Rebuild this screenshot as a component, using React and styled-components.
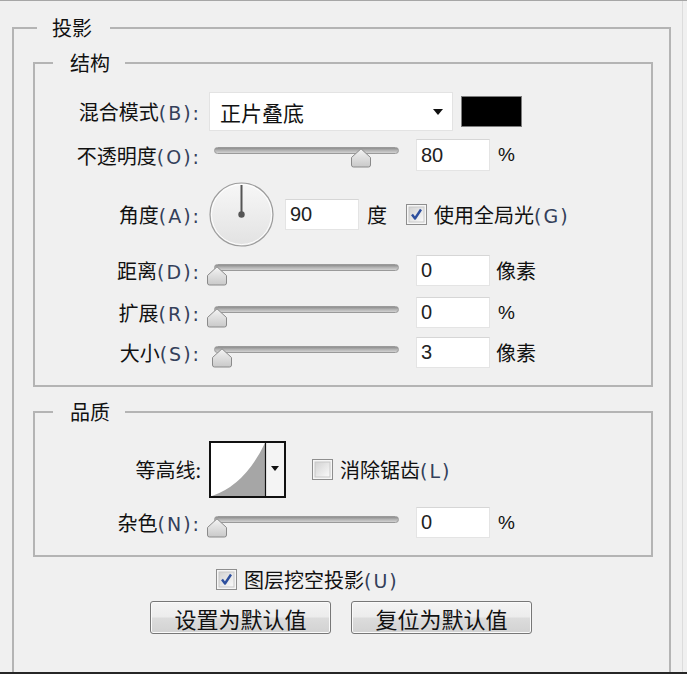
import React from "react";
import styled, { createGlobalStyle } from "styled-components";

const Global = createGlobalStyle`
  html, body { margin: 0; padding: 0; background: #f0f0f0; }
  body { font-family: "Noto Sans CJK SC", "Noto Sans", sans-serif; color: #1b1b1b; }
`;

const Window = styled.div`
  width: 687px;
  height: 674px;
  box-sizing: border-box;
  overflow: hidden;
  background: #f0f0f0;
  border-top: 1px solid #a6a6a6;
  border-bottom: 2px solid #262626;
  padding-left: 12px;
  padding-right: 4px;
  position: relative;
  &::after {
    content: "";
    position: absolute;
    top: 0;
    bottom: 0;
    right: 4px;
    border-right: 1px solid #dcdcdc;
  }
`;

const Group = styled.fieldset`
  margin: ${(p) => p.$mt || 0}px 0 0 0;
  padding: 0;
  box-sizing: border-box;
  width: ${(p) => p.$w}px;
  border: 2px solid #b4b4b4;
  border-bottom: ${(p) => (p.$open ? "none" : "2px solid #b4b4b4")};
  min-height: ${(p) => (p.$open ? "700px" : "auto")};
`;

const Legend = styled.legend`
  margin-left: ${(p) => p.$ml}px;
  padding: 0 ${(p) => p.$pr}px 0 ${(p) => p.$pl}px;
  font-size: 20px;
  line-height: 24px;
  color: #111;
`;

const OuterBody = styled.div`
  padding: 11px 0 0 19px;
`;

const InnerBody = styled.div`
  padding: 17px 0 17px 1px;
  display: flex;
  flex-direction: column;
`;

const Row = styled.div`
  display: flex;
  align-items: center;
  gap: 8px;
  height: ${(p) => p.$h}px;
  margin-top: ${(p) => p.$mt || 0}px;
`;

const Label = styled.span`
  flex: none;
  width: 165px;
  text-align: right;
  font-size: 20px;
  white-space: nowrap;
  color: #111;
`;

const Key = styled.span`
  font-family: "DejaVu Sans", sans-serif;
  font-size: 19px;
  letter-spacing: 2px;
  color: #34405a;
`;

const Dropdown = styled.div`
  width: 244px;
  height: 39px;
  box-sizing: border-box;
  background: #ffffff;
  border: 1px solid #e3e3e3;
  display: flex;
  align-items: center;
  justify-content: space-between;
  padding: 0 9px 0 10px;
  font-size: 21px;
  color: #111;
`;

const Caret = styled.span`
  width: 0;
  height: 0;
  border-left: 5px solid transparent;
  border-right: 5px solid transparent;
  border-top: 6px solid #111;
`;

const Swatch = styled.div`
  width: 61px;
  height: 31px;
  box-sizing: border-box;
  background: #000;
  border: 1px solid #7d7d7d;
  margin-top: -1px;
`;

const SliderBox = styled.div`
  position: relative;
  width: 199px;
  height: 100%;
  flex: none;
`;

const Track = styled.div`
  margin: ${(p) => p.$top}px 0 0 5px;
  width: 185px;
  height: 7px;
  box-sizing: border-box;
  border-radius: 4px;
  border: 1px solid #9a9a9a;
  background: linear-gradient(#8e8e8e, #b4b4b4 50%, #d2d2d2);
`;

const ThumbSvg = styled.svg`
  position: absolute;
  top: ${(p) => p.$top}px;
`;

const NumberBox = styled.div`
  flex: none;
  width: 74px;
  height: ${(p) => p.$h || 32}px;
  box-sizing: border-box;
  background: #fff;
  border: 1px solid #e4e4e4;
  border-top-color: #d6d6d6;
  display: flex;
  align-items: center;
  padding-left: 4px;
  font-family: "Liberation Sans", Arial, sans-serif;
  font-size: 20px;
  color: #222;
`;

const Unit = styled.span`
  font-size: ${(p) => (p.$latin ? 19 : 20)}px;
  font-family: ${(p) =>
    p.$latin ? '"Liberation Sans", Arial, sans-serif' : '"Noto Sans CJK SC", sans-serif'};
  color: #111;
  margin-left: ${(p) => p.$ml || 0}px;
`;

const DialSvg = styled.svg`
  flex: none;
  margin-right: 3px;
`;

const CheckWrap = styled.label`
  display: flex;
  align-items: center;
  gap: 7px;
  margin-left: ${(p) => p.$ml || 0}px;
  font-size: 20px;
  color: #111;
  white-space: nowrap;
`;

const ContourSvg = styled.svg`
  flex: none;
  margin-right: 18px;
`;

const Footer = styled.div`
  display: flex;
  flex-direction: column;
`;

const CheckRow = styled.div`
  display: flex;
  align-items: center;
  height: 21px;
  margin: 12px 0 0 183px;
`;

const Buttons = styled.div`
  display: flex;
  gap: 20px;
  margin: 11px 0 0 117px;
`;

const Button = styled.button`
  width: 181px;
  height: 33px;
  box-sizing: border-box;
  border: 1px solid #777;
  border-radius: 3px;
  background: linear-gradient(#f4f4f4, #ececec 48%, #dcdcdc 52%, #d2d2d2);
  box-shadow: inset 0 0 0 1px #fafafa;
  font-family: "Noto Sans CJK SC", sans-serif;
  font-size: 22px;
  line-height: 1;
  color: #111;
  padding: 0;
`;

function Key_({ k }) {
  return <Key>({k}):</Key>;
}

function Thumb({ pct, top }) {
  const left = 7 + pct * 181 - 10.5;
  return (
    <ThumbSvg $top={top} width="22" height="20" viewBox="0 0 22 20" style={{ left }}>
      <defs>
        <linearGradient id="tg" x1="0" y1="0" x2="0" y2="1">
          <stop offset="0" stopColor="#f4f4f4" />
          <stop offset="1" stopColor="#c9c9c9" />
        </linearGradient>
      </defs>
      <path
        d="M11 0.8 L20.5 9.5 L20.5 17 Q20.5 19 18.5 19 L3.5 19 Q1.5 19 1.5 17 L1.5 9.5 Z"
        fill="url(#tg)"
        stroke="#8a8a8a"
        strokeWidth="1"
      />
    </ThumbSvg>
  );
}

function Slider({ pct, trackTop = 8, thumbTop = 10 }) {
  return (
    <SliderBox>
      <Track $top={trackTop} />
      <Thumb pct={pct} top={thumbTop} />
    </SliderBox>
  );
}

function CheckBox({ checked }) {
  return (
    <svg width="21" height="21" viewBox="0 0 21 21">
      <defs>
        <linearGradient id={checked ? "cbg1" : "cbg0"} x1="0" y1="0" x2="1" y2="1">
          <stop offset="0" stopColor="#d2d2d2" />
          <stop offset="1" stopColor="#fbfbfb" />
        </linearGradient>
      </defs>
      <rect x="0.5" y="0.5" width="20" height="20" fill="#f6f6f6" stroke="#8e8e8e" />
      <rect x="3" y="3" width="15" height="15" fill={`url(#${checked ? "cbg1" : "cbg0"})`} stroke="#c8c8c8" />
      {checked && (
        <path d="M6 10.5 L9 14.5 L15 5.5" fill="none" stroke="#2d4f9e" strokeWidth="2.4" strokeLinejoin="round" />
      )}
    </svg>
  );
}

function Dial() {
  return (
    <DialSvg width="65" height="65" viewBox="0 0 65 65">
      <defs>
        <linearGradient id="dialg" x1="0" y1="0" x2="0" y2="1">
          <stop offset="0" stopColor="#f7f7f7" />
          <stop offset="1" stopColor="#e2e2e2" />
        </linearGradient>
      </defs>
      <circle cx="32.5" cy="32.5" r="31.5" fill="url(#dialg)" stroke="#9c9c9c" strokeWidth="1.2" />
      <circle cx="32.5" cy="32.5" r="30" fill="none" stroke="#ffffff" strokeWidth="1" />
      <line x1="32.5" y1="32.5" x2="32.5" y2="3" stroke="#555" strokeWidth="2" />
      <circle cx="32.5" cy="32.5" r="3.2" fill="#555" />
    </DialSvg>
  );
}

function Contour() {
  return (
    <ContourSvg width="77" height="57" viewBox="0 0 77 57">
      <rect x="1" y="1" width="75" height="55" fill="#fff" stroke="#111" strokeWidth="2" />
      <path d="M3 55 Q36 44 56 2 L56 55 Z" fill="#a6a6a6" />
      <rect x="56.5" y="2" width="18.5" height="53" fill="#f4f4f4" />
      <line x1="56.5" y1="1" x2="56.5" y2="56" stroke="#111" strokeWidth="1.2" />
      <path d="M62 25 L70 25 L66 30 Z" fill="#111" />
    </ContourSvg>
  );
}

export default function App() {
  return (
    <>
      <Global />
      <Window>
        <Group $w={659} $open $mt={15}>
          <Legend $ml={23} $pl={15} $pr={18}>投影</Legend>
          <OuterBody>
            <Group $w={620}>
              <Legend $ml={18} $pl={17} $pr={15}>结构</Legend>
              <InnerBody>
                <Row $h={39}>
                  <Label>混合模式<Key_ k="B" /></Label>
                  <Dropdown>
                    <span>正片叠底</span>
                    <Caret />
                  </Dropdown>
                  <Swatch />
                </Row>
                <Row $h={32} $mt={8}>
                  <Label>不透明度<Key_ k="O" /></Label>
                  <Slider pct={0.8} trackTop={8} thumbTop={9} />
                  <NumberBox>80</NumberBox>
                  <Unit $latin>%</Unit>
                </Row>
                <Row $h={64} $mt={11}>
                  <Label>角度<Key_ k="A" /></Label>
                  <Dial />
                  <NumberBox $h={31}>90</NumberBox>
                  <Unit>度</Unit>
                  <CheckWrap $ml={11}>
                    <CheckBox checked />
                    <span>使用全局光<Key>(G)</Key></span>
                  </CheckWrap>
                </Row>
                <Row $h={31} $mt={9}>
                  <Label>距离<Key_ k="D" /></Label>
                  <Slider pct={0} trackTop={9} thumbTop={11} />
                  <NumberBox $h={31}>0</NumberBox>
                  <Unit $ml={-2}>像素</Unit>
                </Row>
                <Row $h={31} $mt={11}>
                  <Label>扩展<Key_ k="R" /></Label>
                  <Slider pct={0} trackTop={9} thumbTop={11} />
                  <NumberBox $h={31}>0</NumberBox>
                  <Unit $latin>%</Unit>
                </Row>
                <Row $h={31} $mt={9}>
                  <Label>大小<Key_ k="S" /></Label>
                  <Slider pct={0.03} trackTop={9} thumbTop={11} />
                  <NumberBox $h={31}>3</NumberBox>
                  <Unit $ml={-2}>像素</Unit>
                </Row>
              </InnerBody>
            </Group>
            <Group $w={620} $mt={13}>
              <Legend $ml={18} $pl={17} $pr={15}>品质</Legend>
              <InnerBody>
                <Row $h={56}>
                  <Label>等高线:</Label>
                  <Contour />
                  <CheckWrap>
                    <CheckBox />
                    <span>消除锯齿<Key>(L)</Key></span>
                  </CheckWrap>
                </Row>
                <Row $h={31} $mt={10}>
                  <Label>杂色<Key_ k="N" /></Label>
                  <Slider pct={0} trackTop={9} thumbTop={11} />
                  <NumberBox $h={31}>0</NumberBox>
                  <Unit $latin>%</Unit>
                </Row>
              </InnerBody>
            </Group>
            <Footer>
              <CheckRow>
                <CheckWrap>
                  <CheckBox checked />
                  <span>图层挖空投影<Key>(U)</Key></span>
                </CheckWrap>
              </CheckRow>
              <Buttons>
                <Button>设置为默认值</Button>
                <Button>复位为默认值</Button>
              </Buttons>
            </Footer>
          </OuterBody>
        </Group>
      </Window>
    </>
  );
}
